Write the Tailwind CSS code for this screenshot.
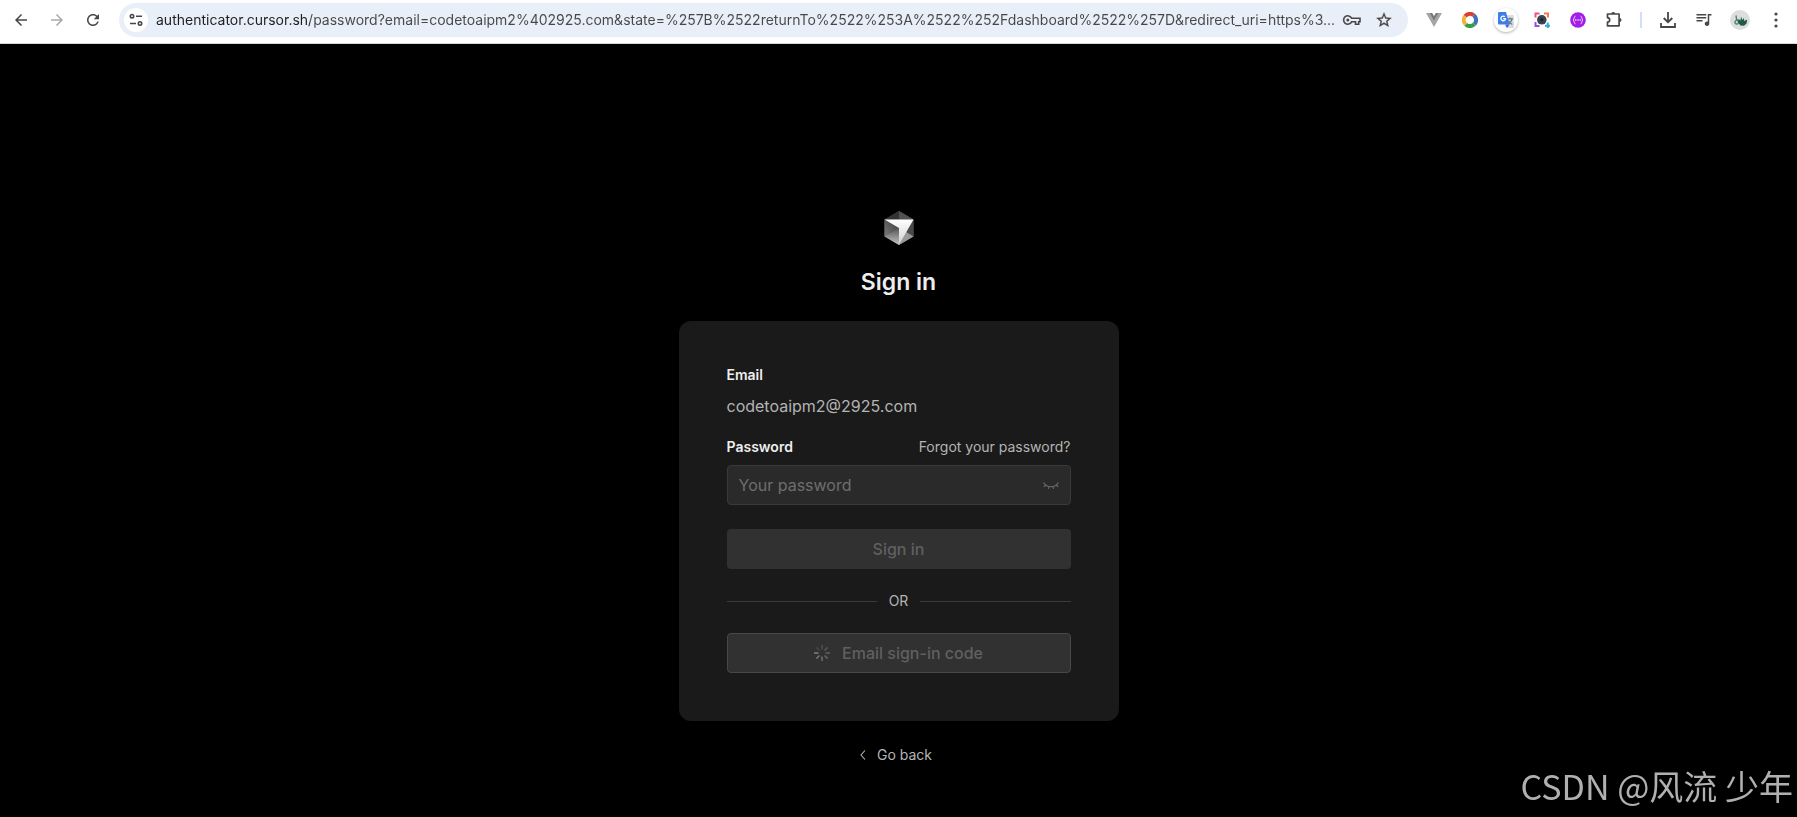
<!DOCTYPE html>
<html lang="en">
<head>
<meta charset="utf-8">
<meta name="viewport" content="width=device-width, initial-scale=1">
<title>Sign in</title>
<script src="https://cdn.jsdelivr.net/npm/@tailwindcss/browser@4"></script>
</head>
<body class="flex min-h-screen flex-col bg-black font-['Inter',sans-serif] text-sm text-[#b4b4b4]">

<header class="flex h-11 items-center border-b border-[#d5d9dc] bg-white px-[3px] pb-[3px] text-[#474747]">
  <button aria-label="Back" class="flex h-9 w-9 shrink-0 items-center justify-center">
    <svg class="size-[18px]" viewBox="0 0 24 24" fill="currentColor"><path d="M20 11H7.83l5.59-5.59L12 4l-8 8 8 8 1.41-1.41L7.83 13H20v-2z"/></svg>
  </button>
  <button aria-label="Forward" class="flex h-9 w-9 shrink-0 items-center justify-center text-[#aaaaaa]">
    <svg class="size-[18px]" viewBox="0 0 24 24" fill="currentColor"><path d="M4 13h12.17l-5.58 5.59L12 20l8-8-8-8-1.41 1.41L16.17 11H4v2z"/></svg>
  </button>
  <button aria-label="Reload" class="flex h-9 w-9 shrink-0 items-center justify-center">
    <svg class="size-[18px]" viewBox="0 0 24 24" fill="currentColor"><path d="M17.65 6.35C16.2 4.9 14.21 4 12 4c-4.42 0-7.99 3.58-7.99 8s3.57 8 7.99 8c3.73 0 6.84-2.55 7.73-6h-2.08c-.82 2.33-3.04 4-5.65 4-3.31 0-6-2.69-6-6s2.69-6 6-6c1.66 0 3.14.69 4.22 1.78L13 11h7V4l-2.35 2.35z"/></svg>
  </button>

  <div class="mx-2 flex h-[34px] min-w-0 flex-1 items-center rounded-full bg-[#e9eff9] pr-2 pl-[5px]">
    <button aria-label="View site information" class="flex size-6 shrink-0 items-center justify-center rounded-full bg-white">
      <svg class="size-4" viewBox="0 0 16 16" fill="none" stroke="currentColor" stroke-width="1.6"><circle cx="4" cy="4.2" r="1.7"/><path d="M8 4.2h6M2 11.5h6"/><circle cx="12" cy="11.5" r="1.7"/></svg>
    </button>
    <input aria-label="Address" type="text" spellcheck="false" class="ml-2 min-w-0 flex-1 bg-[linear-gradient(90deg,#1f1f1f_154px,#474747_154px)] bg-clip-text text-sm leading-5 text-transparent outline-none" value="authenticator.cursor.sh/password?email=codetoaipm2%402925.com&amp;state=%257B%2522returnTo%2522%253A%2522%252Fdashboard%2522%257D&amp;redirect_uri=https%3...">
    <button aria-label="Manage passwords" class="flex h-8 w-8 shrink-0 items-center justify-center">
      <svg class="h-3 w-5" viewBox="0 0 20 12" fill="none" stroke="currentColor" stroke-width="1.6"><path d="M9.6 4.2H18v3.600h-1.300v2.400h-3.200V7.800H9.600A4.200 4.200 0 1 1 9.600 4.200z"/><circle cx="5.800" cy="6" r="1.500" fill="currentColor" stroke="none"/></svg>
    </button>
    <button aria-label="Bookmark this tab" class="flex h-8 w-8 shrink-0 items-center justify-center">
      <svg class="size-[18px]" viewBox="0 0 24 24" fill="currentColor" stroke="currentColor" stroke-width=".4"><path d="M22 9.240l-7.190-.62L12 2 9.190 8.630 2 9.240l5.460 4.730L5.820 21 12 17.270 18.180 21l-1.630-7.030L22 9.240zM12 15.400l-3.760 2.270 1-4.280-3.320-2.880 4.380-.38L12 6.100l1.710 4.040 4.380.38-3.320 2.880 1 4.280L12 15.400z"/></svg>
    </button>
  </div>

  <button aria-label="Vue devtools" class="flex h-9 w-9 shrink-0 items-center justify-center">
    <svg class="size-4" viewBox="0 0 16 16"><path fill="#a5a5a5" d="M0 1h3.200L8 9.300 12.800 1H16L8 15z"/><path fill="#7c7c7c" d="M3.200 1h3L8 4l1.800-3h3L8 9.300z"/></svg>
  </button>
  <button aria-label="Color ring extension" class="flex h-9 w-9 shrink-0 items-center justify-center">
    <svg class="size-4" viewBox="0 0 16 16" fill="none" stroke-width="4"><path stroke="#d9412f" d="M3.100 4.200A6 6 0 0 1 11.600 3.200"/><path stroke="#4172b8" d="M11.600 3.200A6 6 0 0 1 12.400 12.200"/><path stroke="#35a04a" d="M12.400 12.200A6 6 0 0 1 3.700 12.300"/><path stroke="#f0b43c" d="M3.700 12.300A6 6 0 0 1 3.100 4.200"/></svg>
  </button>
  <button aria-label="Google Translate" class="flex h-9 w-9 shrink-0 items-center justify-center">
    <span class="flex size-6 items-center justify-center rounded-full bg-white shadow-[0_1px_3px_rgba(0,0,0,0.3)]">
      <svg class="size-4" viewBox="0 0 16 16"><path fill="#dadce0" d="M6 3h9.200c.5 0 .8.3.8.8v11.400c0 .5-.3.800-.8.800H9z"/><path stroke="#5f7d88" fill="none" stroke-width="1.200" d="M9 6.800h6M12 5.500v1.300M14 7c-.6 2.500-2 4.200-3.500 5.200M10.300 8.500c.7 1.600 2.200 3 4 4"/><path fill="#2f62d0" d="M7 12.500h4.500L9 16z"/><path fill="#3f7eea" d="M.8 0H8l3.500 12.500H.8c-.5 0-.8-.3-.8-.8V.8C0 .3.300 0 .8 0z"/><path stroke="#fff" fill="none" stroke-width="1.300" d="M6.800 4.800A2.300 2.300 0 1 0 7.500 6.700H5.200"/></svg>
    </span>
  </button>
  <button aria-label="Screen capture" class="flex h-9 w-9 shrink-0 items-center justify-center">
    <svg class="size-4" viewBox="0 0 16 16" fill="none" stroke-width="2"><path stroke="#e8508a" d="M1.500 5.500V1.500H5.500"/><path stroke="#f47c4c" d="M10 1.500h4V5.500"/><path stroke="#9b4fe0" d="M1.500 10v4H5.500"/><path stroke="#35a8d8" d="M13.800 10.500V16M11 13.800h5"/><circle cx="7.800" cy="7.800" r="4.800" fill="#3a4350"/><circle cx="7.800" cy="7.800" r="1.800" fill="#20262e"/></svg>
  </button>
  <button aria-label="JSON extension" class="flex h-9 w-9 shrink-0 items-center justify-center">
    <svg class="size-4" viewBox="0 0 16 16"><circle cx="8" cy="8" r="7.800" fill="#a21ee8"/><path fill="none" stroke="#efc9ff" d="M5.500 4.200c-2 0-.6 3-2.500 3.800 1.900.8.500 3.800 2.500 3.800M10.500 4.200c2 0 .6 3 2.500 3.800-1.900.8-.5 3.800-2.500 3.800"/><path stroke="#efc9ff" stroke-width="1.400" stroke-dasharray="1.400 .9" d="M5 8h6"/></svg>
  </button>
  <button aria-label="Extensions" class="flex h-9 w-9 shrink-0 items-center justify-center">
    <svg class="size-[18px]" viewBox="0 0 18 18" fill="none" stroke="currentColor" stroke-width="1.700" stroke-linejoin="round"><path d="M2.500 3h11.600v11.800H2.500v-3.700c1.500-.2 2.200-1.100 2.200-2.200S4 6.900 2.500 6.700z"/><path fill="currentColor" stroke="none" d="M6.300 3a2 2 0 0 1 4 0zM14.500 7a2 2 0 0 1 0 4z"/></svg>
  </button>
  <div class="mx-2 h-4 w-[2px] shrink-0 bg-[#d0e0fb]"></div>
  <button aria-label="Downloads" class="flex h-9 w-9 shrink-0 items-center justify-center">
    <svg class="size-4" viewBox="0 0 16 16" fill="none" stroke="currentColor" stroke-width="1.800"><path d="M8 0v9.800M3.700 6 8 10.200 12.300 6M1 11v4h14v-4"/></svg>
  </button>
  <button aria-label="Media controls" class="flex h-9 w-9 shrink-0 items-center justify-center">
    <svg class="size-[18px]" viewBox="0 0 24 24" fill="currentColor"><path d="M15 4H2v2h13V4zm0 4H2v2h13V8zM2 14h8v-2H2v2zM17 4v10.180c-.31-.11-.65-.18-1-.18-1.660 0-3 1.340-3 3s1.340 3 3 3 3-1.340 3-3V6h3V4h-5z"/></svg>
  </button>
  <button aria-label="Profile" class="flex h-9 w-9 shrink-0 items-center justify-center">
    <svg class="size-5" viewBox="0 0 20 20"><circle cx="10" cy="10" r="10" fill="#dcdedd"/><path fill="none" stroke="#54806d" stroke-width="1.400" d="M6.500 5.500c-1.500 1.500 1.500 3-.5 5s-1 3 .5 3.500 2-1 2-2.500l-1-2"/><path fill="#1f5a43" d="M8.500 9l2 1.500.5-4 1.300 3.500L14 8l.2 3 3-1.500-.7 4-2.500 2.300-3.500-.3-2.500-3z"/></svg>
  </button>
  <button aria-label="Menu" class="flex h-9 w-9 shrink-0 items-center justify-center">
    <svg class="size-[18px]" viewBox="0 0 18 18" fill="currentColor"><circle cx="9" cy="3" r="1.600"/><circle cx="9" cy="9" r="1.600"/><circle cx="9" cy="15" r="1.600"/></svg>
  </button>
</header>

<main class="flex flex-1 flex-col items-center px-4 pt-[167px]">
  <svg class="h-[34px] w-[30px]" viewBox="0 0 30 34" role="img" aria-label="Cursor">
    <defs>
      <linearGradient id="lower" x1="0" y1="0" x2="0" y2="1"><stop offset="0" stop-color="#555"/><stop offset="1" stop-color="#c4c4c4"/></linearGradient>
      <linearGradient id="left" x1="1" y1="0" x2="0" y2="1"><stop offset="0" stop-color="#3a3a3a"/><stop offset="1" stop-color="#7a7a7a"/></linearGradient>
      <linearGradient id="face" x1="0" y1="0" x2="0" y2="1"><stop offset="0" stop-color="#fff"/><stop offset="1" stop-color="#d0d0d0"/></linearGradient>
    </defs>
    <path fill="#555" d="M15 0l14.500 8.500v17L15 34 .5 25.500v-17z"/>
    <path fill="#333" d="M15 0v8.500H.5z"/>
    <path fill="#505050" d="M15 0v8.500h14.500z"/>
    <path fill="url(#left)" d="M.5 8.500L15 17 .5 25.500z"/>
    <path fill="url(#lower)" d="M.5 25.500L15 17v17z"/>
    <path fill="#484848" d="M29.500 8.500v17L22 21z"/>
    <path fill="#999" d="M29.500 25.500L15 34l7-13z"/>
    <path fill="url(#face)" d="M.5 8.500h29L15 34V17z"/>
  </svg>
  <h1 class="mt-[21px] text-[23px] leading-8 font-semibold text-[#eeeeee]">Sign in</h1>

  <form class="mt-[23px] w-full max-w-[440px] rounded-xl bg-[#1a1a1a] px-12 pt-11 pb-12">
    <label for="email" class="block leading-5 font-semibold text-[#eeeeee]">Email</label>
    <output id="email" class="mt-2 block text-base leading-[26px] text-[#b4b4b4]">codetoaipm2@2925.com</output>
    <div class="mt-[18px] flex justify-between leading-5">
      <label for="password" class="font-semibold text-[#eeeeee]">Password</label>
      <a href="#">Forgot your password?</a>
    </div>
    <div class="mt-2 flex h-10 items-center rounded-[4px] border border-[#3a3a3a] bg-[#2a2a2a] pr-[11px] pl-[11px]">
      <input id="password" type="password" placeholder="Your password" class="min-w-0 flex-1 text-base leading-6 text-[#eeeeee] outline-none placeholder:text-[#6e6e6e]">
      <button type="button" aria-label="Show password" class="text-[#6a6a6a]">
        <svg class="size-4" viewBox="0 0 16 16" fill="none" stroke="currentColor" stroke-width="1.100"><path d="M.5 5.500C4 11.200 12 11.200 15.500 5.500M2.700 8 .8 9.800M13.300 8l1.900 1.800M6 9.600l-.6 2.200M10 9.600l.6 2.200"/></svg>
      </button>
    </div>
    <button type="submit" disabled class="mt-6 block h-10 w-full rounded-[4px] bg-[#313131] text-base leading-6 font-medium text-[#606060]">Sign in</button>
    <div class="my-[22px] flex items-center gap-3 leading-5">
      <span class="h-px flex-1 bg-[#3a3a3a]"></span>OR<span class="h-px flex-1 bg-[#3a3a3a]"></span>
    </div>
    <button type="button" disabled class="flex h-10 w-full items-center justify-center gap-3 rounded-[4px] border border-[#484848] bg-[#313131] text-base leading-6 font-medium text-[#606060]">
      <svg class="size-4" viewBox="0 0 16 16" fill="none" stroke="#777" stroke-width="1.700"><path opacity=".4" d="M8 0v4.500"/><path opacity=".5" d="M13.700 2.300l-3.200 3.200"/><path opacity=".6" d="M16 8h-4.500"/><path opacity=".7" d="M13.700 13.700l-3.200-3.200"/><path opacity=".8" d="M8 16v-4.500"/><path opacity=".9" d="M2.300 13.700l3.200-3.200"/><path d="M0 8h4.500"/><path opacity=".3" d="M2.300 2.300l3.200 3.200"/></svg>
      Email sign-in code
    </button>
  </form>

  <a href="#" class="mt-6 mr-2.5 flex items-center gap-1.5 leading-5">
    <svg class="size-4" viewBox="0 0 16 16" fill="none" stroke="currentColor" stroke-width="1.100"><path d="M10 3.500 6 8l4 4.500"/></svg>
    Go back
  </a>
</main>

<div class="fixed right-1 bottom-2 font-['Noto_Sans_CJK_SC',sans-serif] text-[34px] leading-[46px] whitespace-nowrap text-[#b0b0b0]">CSDN @风流 少年</div>
</body>
</html>
